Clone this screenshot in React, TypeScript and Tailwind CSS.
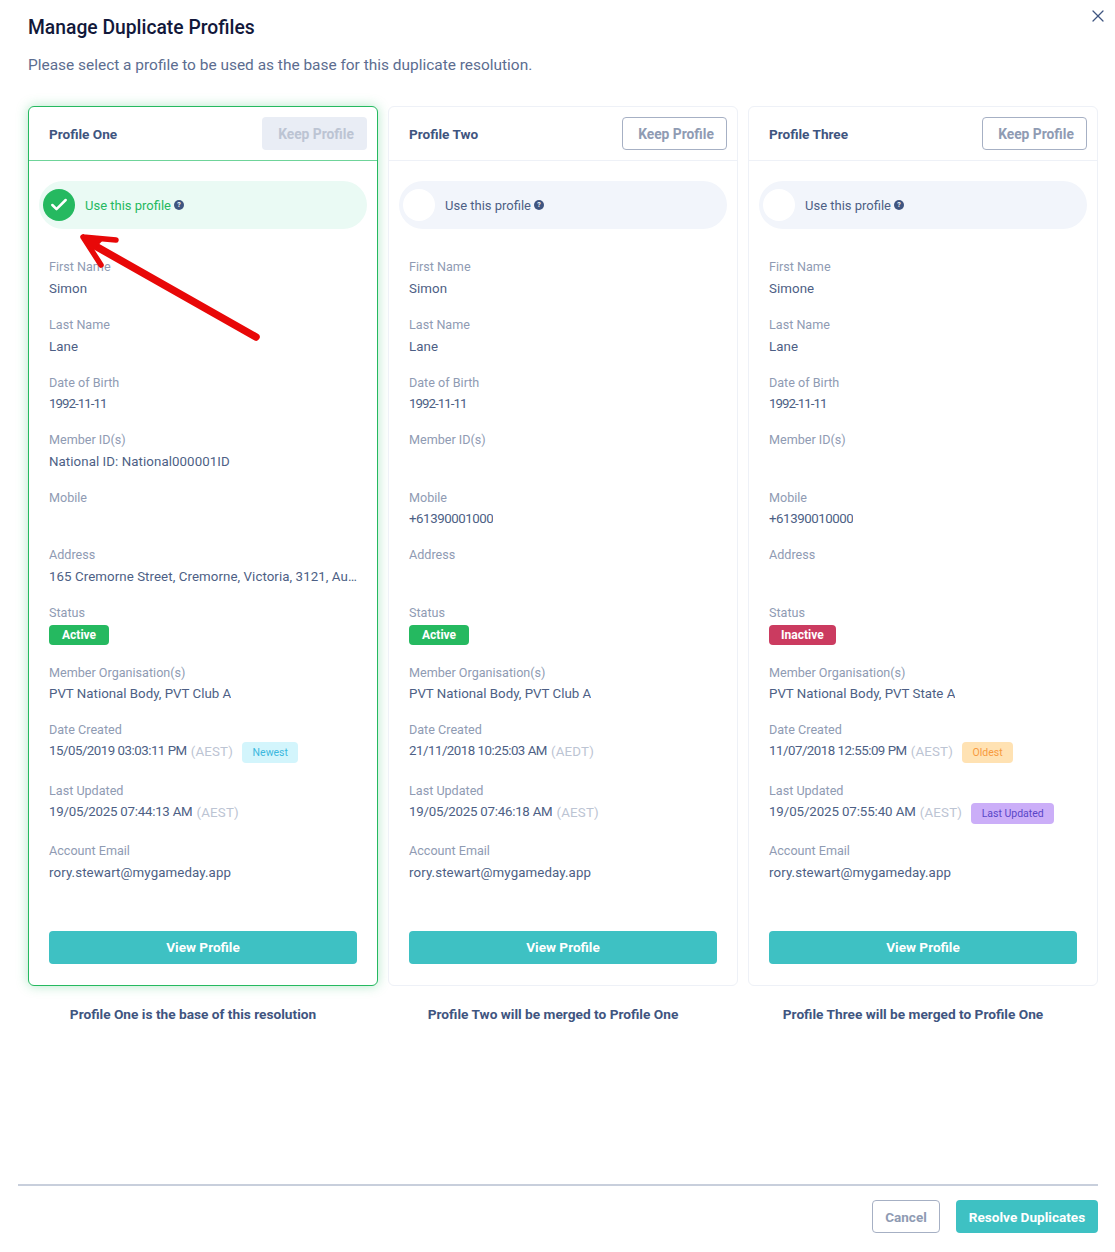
import React from "react";
import { X, Check } from "lucide-react";

type Field = { label: string; value?: string; tz?: string; tag?: string; tagClass?: string; status?: string; h: string; track?: string };

type P = { name: string; selected?: boolean; fields: Field[]; caption: string };

const f = (label: string, value: string | undefined, h: string, track?: string): Field => ({ label, value, h, track });

const NEWEST = "bg-[#d3f5fc] text-[#3cb8de]";
const OLDEST = "bg-[#ffe2b3] text-[#f79a3e]";
const UPDATED = "bg-[#cbaef8] text-[#5a46c8]";
const BIRTH = "tracking-[-0.95px]";
const PHONE = "tracking-[-0.45px]";
const DATE = "tracking-[-0.5px]";
const UPD = "tracking-[-0.25px]";
const UPD3 = "tracking-[-0.1px]";
const MAIL = "pt-px tracking-[0.1px]";
const PLAIN = "pt-px tracking-[0.07px]";

const profiles: P[] = [
  {
    name: "Profile One",
    selected: true,
    caption: "Profile One is the base of this resolution",
    fields: [
      f("First Name", "Simon", "h-[58px]", PLAIN),
      f("Last Name", "Lane", "h-[58px]", PLAIN),
      f("Date of Birth", "1992-11-11", "h-[57px]", BIRTH),
      f("Member ID(s)", "National ID: National000001ID", "h-[58px]", PLAIN),
      f("Mobile", undefined, "h-[57px]"),
      f("Address", "165 Cremorne Street, Cremorne, Victoria, 3121, Australia", "h-[58px]", PLAIN),
      { label: "Status", status: "Active", h: "h-[60px]" },
      f("Member Organisation(s)", "PVT National Body, PVT Club A", "h-[57px]"),
      { label: "Date Created", value: "15/05/2019 03:03:11 PM", tz: "(AEST)", tag: "Newest", tagClass: NEWEST, h: "h-[61px]", track: DATE },
      { label: "Last Updated", value: "19/05/2025 07:44:13 AM", tz: "(AEST)", h: "h-[60px]", track: UPD },
      f("Account Email", "rory.stewart@mygameday.app", "h-[58px]", MAIL),
    ],
  },
  {
    name: "Profile Two",
    caption: "Profile Two will be merged to Profile One",
    fields: [
      f("First Name", "Simon", "h-[58px]", PLAIN),
      f("Last Name", "Lane", "h-[58px]", PLAIN),
      f("Date of Birth", "1992-11-11", "h-[57px]", BIRTH),
      f("Member ID(s)", undefined, "h-[58px]"),
      f("Mobile", "+61390001000", "h-[57px]", PHONE),
      f("Address", undefined, "h-[58px]"),
      { label: "Status", status: "Active", h: "h-[60px]" },
      f("Member Organisation(s)", "PVT National Body, PVT Club A", "h-[57px]"),
      { label: "Date Created", value: "21/11/2018 10:25:03 AM", tz: "(AEDT)", h: "h-[61px]", track: DATE },
      { label: "Last Updated", value: "19/05/2025 07:46:18 AM", tz: "(AEST)", h: "h-[60px]", track: UPD },
      f("Account Email", "rory.stewart@mygameday.app", "h-[58px]", MAIL),
    ],
  },
  {
    name: "Profile Three",
    caption: "Profile Three will be merged to Profile One",
    fields: [
      f("First Name", "Simone", "h-[58px]", PLAIN),
      f("Last Name", "Lane", "h-[58px]", PLAIN),
      f("Date of Birth", "1992-11-11", "h-[57px]", BIRTH),
      f("Member ID(s)", undefined, "h-[58px]"),
      f("Mobile", "+61390010000", "h-[57px]", PHONE),
      f("Address", undefined, "h-[58px]"),
      { label: "Status", status: "Inactive", h: "h-[60px]" },
      f("Member Organisation(s)", "PVT National Body, PVT State A", "h-[57px]"),
      { label: "Date Created", value: "11/07/2018 12:55:09 PM", tz: "(AEST)", tag: "Oldest", tagClass: OLDEST, h: "h-[61px]", track: DATE },
      { label: "Last Updated", value: "19/05/2025 07:55:40 AM", tz: "(AEST)", tag: "Last Updated", tagClass: UPDATED, h: "h-[60px]", track: UPD3 },
      f("Account Email", "rory.stewart@mygameday.app", "h-[58px]", MAIL),
    ],
  },
];

function Row({ field }: { field: Field }) {
  return (
    <div className={`${field.h} flex flex-col`}>
      <div className="h-[21px] text-[12.6px] leading-[21px] text-[#8f9bb3]">{field.label}</div>
      {field.status ? (
        <div className="-mt-px">
          <span className={`inline-flex h-5 items-center rounded-[4px] text-[12px] font-bold text-white ${field.status === "Active" ? "bg-[#25b960] px-[13px]" : "bg-[#cb3b60] px-3"}`}>
            {field.status}
          </span>
        </div>
      ) : (
        <div className="flex h-[22px] items-center whitespace-nowrap text-[13.3px] leading-[22px] text-[#4d5f85]">
          <span className={`truncate ${field.track ?? ""}`}>{field.value}</span>
          {field.tz && <span className="ml-1 mt-[2px] tracking-[0.2px] text-[#bcc4d3]">{field.tz}</span>}
          {field.tag && (
            <span className={`ml-[9px] mt-[3px] inline-flex h-[21px] items-center rounded-[4px] px-[10.5px] text-[10.5px] ${field.tagClass}`}>
              {field.tag}
            </span>
          )}
        </div>
      )}
    </div>
  );
}

function Card({ p }: { p: P }) {
  return (
    <div className="flex w-[350px] flex-col">
      <div className={`flex h-[880px] flex-col rounded-[6px] border bg-white ${p.selected ? "border-[#25b960] shadow-[0_0_12px_rgba(37,185,96,0.35)]" : "border-[#eef1f7]"}`}>
        <div className={`flex h-[54px] shrink-0 items-center justify-between border-b pl-5 pr-[10px] ${p.selected ? "border-[#6fd49a]" : "border-[#eef1f7]"}`}>
          <span className="pt-px text-[13.6px] font-bold text-[#3f5580]">{p.name}</span>
          <span className={`flex h-[33px] w-[105px] items-center justify-center rounded-[4px] pl-[3px] pt-px text-[13.8px] font-bold ${p.selected ? "bg-[#e9edf5] text-[#bcc4d3]" : "border border-[#a6b0c4] text-[#8f9bb3]"}`}>
            Keep Profile
          </span>
        </div>
        <div className="px-[10px] pt-5">
          <div className={`flex h-12 items-center rounded-[24px] pl-1 ${p.selected ? "bg-[#eafaf4] text-[#25b960]" : "bg-[#f2f5fb] text-[#4d5f85]"}`}>
            <span className={`flex size-8 items-center justify-center rounded-full ${p.selected ? "bg-[#25b960]" : "bg-white"}`}>
              {p.selected && <Check size={20} strokeWidth={3} className="text-white" />}
            </span>
            <span className="ml-[10px] pt-px text-[13px]">Use this profile</span>
            <span className="ml-[3px] flex size-[10px] items-center justify-center rounded-full bg-[#3f5580] text-[7px] font-bold leading-none text-white">?</span>
          </div>
        </div>
        <div className="flex flex-col px-5 pt-[27px]">
          {p.fields.map((x) => (
            <Row key={x.label} field={x} />
          ))}
        </div>
        <div className="mt-auto px-5 pb-[21px]">
          <div className="flex h-[33px] items-center justify-center rounded-[4px] bg-[#3ec1c3] text-[13.6px] font-bold text-white">
            View Profile
          </div>
        </div>
      </div>
      <div className="mt-[18px] pr-[20px] text-center text-[13.7px] font-bold text-[#3f5580]">{p.caption}</div>
    </div>
  );
}

export default function App() {
  return (
    <div className="relative flex h-[1252px] w-[1115px] flex-col overflow-hidden bg-white font-['Roboto',sans-serif]">
      <button className="absolute right-[7px] top-[6px] text-[#3f5580]">
        <X size={20} strokeWidth={1.5} />
      </button>
      <div className="pl-7 pt-[14px]">
        <h1 className="h-[28px] text-[19.3px] font-medium leading-[28px] text-[#12183a]">Manage Duplicate Profiles</h1>
        <p className="mt-[11px] h-[24px] text-[15.45px] leading-[24px] text-[#5c6d90]">Please select a profile to be used as the base for this duplicate resolution.</p>
      </div>
      <div className="mt-[29px] flex gap-[10px] pl-7">
        {profiles.map((p) => (
          <Card key={p.name} p={p} />
        ))}
      </div>
      <div className="mt-auto pb-[19px] pl-[18px] pr-[17px]">
        <div className="h-[2px] bg-[#c8cfdc]" />
        <div className="mt-[14px] flex justify-end gap-4">
          <span className="flex h-[33px] w-[68px] items-center justify-center rounded-[4px] border border-[#a6b0c4] pt-px text-[13.5px] font-bold text-[#8f9bb3]">Cancel</span>
          <span className="flex h-[33px] w-[142px] items-center justify-center rounded-[4px] bg-[#3ec1c3] pt-px text-[13.6px] font-bold text-white">Resolve Duplicates</span>
        </div>
      </div>
      <svg className="pointer-events-none absolute left-0 top-0" width="300" height="350" viewBox="0 0 300 350">
        <path d="M256 337 L90 243" fill="none" stroke="#e80808" strokeWidth="7.5" strokeLinecap="round" />
        <path d="M83 237 L116 240 M83 237 L101 265" fill="none" stroke="#e80808" strokeWidth="5.5" strokeLinecap="round" />
        <path d="M83 237 L104 239 L92 252 Z" fill="#e80808" />
      </svg>
    </div>
  );
}
